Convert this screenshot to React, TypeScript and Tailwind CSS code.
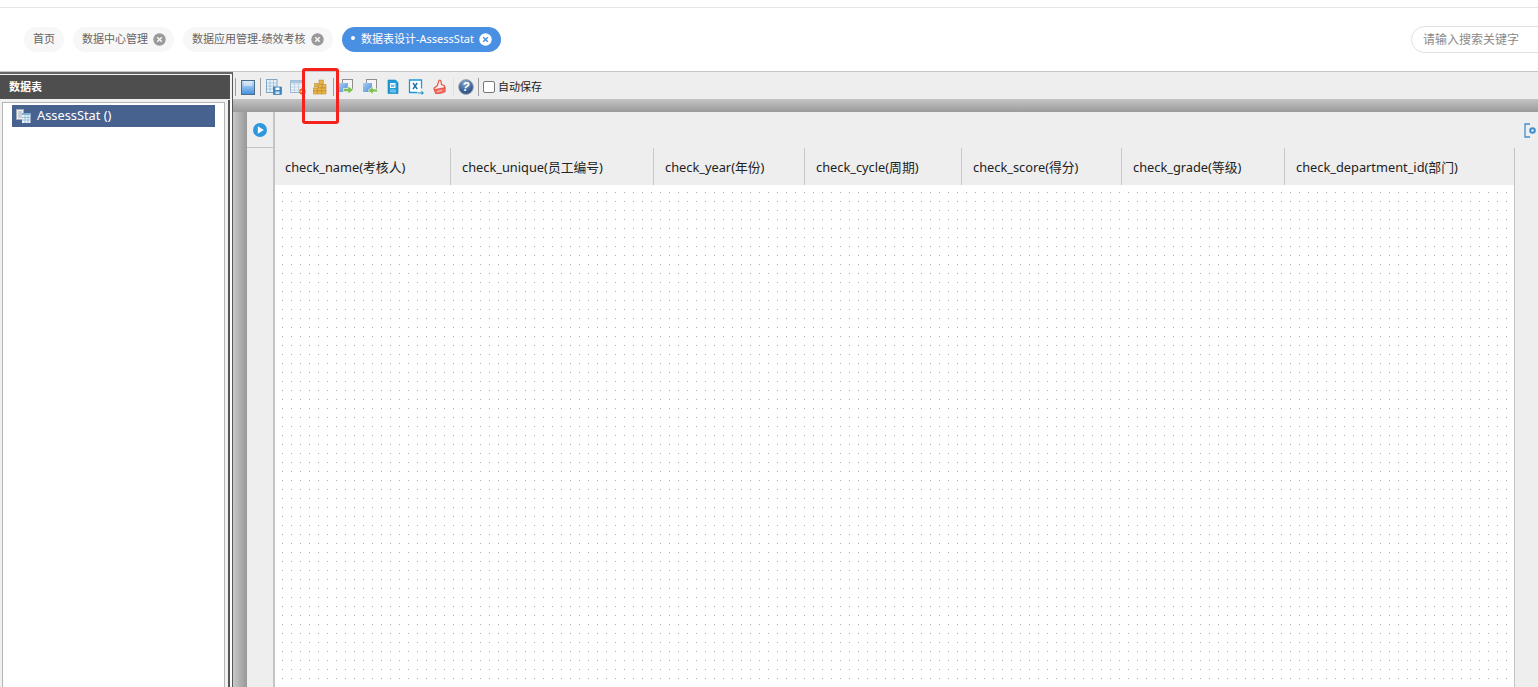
import React from "react";

const font = { fontFamily: '"Noto Sans", "Noto Sans CJK SC", sans-serif' };

function Close({ light }: { light?: boolean }) {
  return (
    <svg width="13" height="13" viewBox="0 0 13 13" className="ml-[5px] shrink-0">
      <circle cx="6.5" cy="6.5" r="6.2" fill={light ? "#ffffff" : "#9a9a9a"} />
      <path d="M4.2 4.2l4.6 4.6M8.8 4.2l-4.6 4.6" stroke={light ? "#4a90e2" : "#f7f7f7"} strokeWidth="1.5" />
    </svg>
  );
}

function Tab({ label, close = true, w }: { label: string; close?: boolean; w: string }) {
  return (
    <div className={`flex h-[25px] items-center rounded-full bg-[#f7f7f7] pl-[9px] text-[11px] text-[#666] ${w}`}>
      <span>{label}</span>
      {close && <Close />}
    </div>
  );
}

function Sep({ faint }: { faint?: boolean }) {
  return <div className={`h-[18px] w-px shrink-0 ${faint ? "bg-[#e0e0e0]" : "bg-[#9c9c9c]"}`} />;
}

const SaveIcon = () => (
  <svg width="14" height="15" viewBox="0 0 14 15">
    <defs>
      <linearGradient id="s1" x1="0" y1="0" x2="0" y2="1">
        <stop offset="0" stopColor="#cfe4f8" />
        <stop offset="1" stopColor="#3f8fdc" />
      </linearGradient>
    </defs>
    <rect x="0.5" y="0.5" width="13" height="14" fill="url(#s1)" stroke="#4a6a88" />
    <rect x="3" y="1" width="8" height="5" fill="#eaf4fc" opacity="0.5" />
  </svg>
);

const TableSaveIcon = () => (
  <svg width="16" height="16" viewBox="0 0 16 16">
    <rect x="0.5" y="0.5" width="10.5" height="13" fill="#eaf3fa" stroke="#7ea6c6" />
    <path d="M1 4h9.5M1 7h9.5M1 10h9.5M4 1v12M7.5 1v12" stroke="#9dbdd6" strokeWidth="0.8" />
    <rect x="7.5" y="8" width="8" height="7.5" fill="#3f8cc4" stroke="#2d6d9e" strokeWidth="0.6" />
    <rect x="9.5" y="8.5" width="4" height="2.5" fill="#fff" />
    <rect x="9.5" y="12.5" width="4" height="2.5" fill="#cfe4f3" />
  </svg>
);

const TableDelIcon = () => (
  <svg width="16" height="16" viewBox="0 0 16 16">
    <rect x="0.5" y="1.5" width="12" height="12" fill="#eef4f9" stroke="#9db8cf" />
    <path d="M1 5h11M1 8h11M1 11h11M4.5 2v11M8.5 2v11" stroke="#b8cde0" strokeWidth="0.8" />
    <rect x="0.5" y="1.5" width="12" height="2.5" fill="#a9c6de" />
    <circle cx="12.5" cy="12.5" r="3.2" fill="#ef6a2a" />
    <path d="M10.8 12.5h3.4" stroke="#fff" strokeWidth="1.1" />
  </svg>
);

const BlocksIcon = () => (
  <svg width="15" height="16" viewBox="0 0 15 16">
    <g fill="#e9b548" stroke="#b9851f" strokeWidth="0.5">
      <rect x="7" y="1" width="4.5" height="4" />
      <rect x="2.5" y="4.5" width="3.5" height="3.5" />
      <rect x="6.5" y="5.5" width="3.5" height="3.5" />
      <rect x="10.5" y="5.5" width="3.5" height="3.5" />
      <rect x="1.5" y="9" width="3.8" height="3" />
      <rect x="5.5" y="9" width="3.8" height="3" />
      <rect x="9.5" y="9" width="4.5" height="3" />
      <rect x="1.5" y="12" width="3.8" height="3" />
      <rect x="5.5" y="12" width="3.8" height="3" />
      <rect x="9.5" y="12" width="4.5" height="3" />
    </g>
  </svg>
);

const ImportIcon = ({ flip, id }: { flip?: boolean; id: string }) => (
  <svg width="16" height="16" viewBox="0 0 16 16">
    <defs>
      <linearGradient id={id} x1="0" y1="0" x2="1" y2="1">
        <stop offset="0" stopColor="#a9cdf2" />
        <stop offset="1" stopColor="#4f8ed8" />
      </linearGradient>
    </defs>
    <rect x="4.5" y="0.5" width="10" height="10" fill="#f4f4f4" stroke="#8f8f8f" />
    <rect x="1" y="4" width="9" height="9" fill={`url(#${id})`} />
    {flip ? (
      <path d="M15.5 10H11V7.5L6 11.5l5 4V13h4.5z" fill="#7cc04e" stroke="#f6f6f6" strokeWidth="0.7" />
    ) : (
      <path d="M5.5 9.5H10V7l5.500 4-5.500 4v-2.500H5.500z" fill="#7cc04e" stroke="#f6f6f6" strokeWidth="0.7" />
    )}
  </svg>
);

const WordIcon = () => (
  <svg width="12" height="16" viewBox="0 0 12 16">
    <path d="M1 1h7.5L11 3.5V14.500H1z" fill="#1e9ad6" stroke="#1581b6" strokeWidth="0.6" />
    <rect x="3" y="4" width="5.5" height="5" fill="#fff" />
    <path d="M4 5.2l.8 2.800.9-2.200.9 2.200.7-2.800" stroke="#1e9ad6" strokeWidth="0.7" fill="none" />
    <path d="M3 11h6M3 12.8h6" stroke="#bfe6f7" strokeWidth="0.8" />
  </svg>
);

const ExcelIcon = () => (
  <svg width="16" height="16" viewBox="0 0 16 16">
    <path d="M13.5 9.5V1H1.500v12.500h8" fill="#fff" stroke="#1e9ad6" strokeWidth="1.3" />
    <path d="M5 4l4.200 6M9.200 4L5 10" stroke="#1e6fb0" strokeWidth="1.4" />
    <path d="M10 13.500h3.500V11.500l2.500 2.500-2.500 2v-1.500H10z" fill="#1e9ad6" />
  </svg>
);

const BrushIcon = () => (
  <svg width="13" height="16" viewBox="0 0 13 16">
    <path d="M6 1.500c.8-.6 1.800-.3 2 .7l.4 3.300 3 1.300.6 2.500-10.500 2.200-.6-2.300 3.300-2.400z" fill="#fbeeee" stroke="#e2574c" strokeWidth="1.2" />
    <path d="M1.500 10.500l10.500-2 .3 4.300c-3 1.700-7 2.200-10 1.700z" fill="#ef6a5e" stroke="#d9453a" strokeWidth="0.6" />
    <path d="M4 12.500l5-1" stroke="#fbd5d0" strokeWidth="0.9" />
  </svg>
);

const HelpIcon = () => (
  <svg width="16" height="16" viewBox="0 0 16 16">
    <defs>
      <radialGradient id="h1" cx="0.45" cy="0.25" r="0.85">
        <stop offset="0" stopColor="#8fa9cf" />
        <stop offset="0.6" stopColor="#3a6199" />
        <stop offset="1" stopColor="#264677" />
      </radialGradient>
    </defs>
    <circle cx="8" cy="8" r="7.4" fill="url(#h1)" stroke="#a3a8b0" strokeWidth="1" />
    <text x="8" y="12.3" textAnchor="middle" fontSize="12" fontWeight="700" fontStyle="italic" fill="#fff" fontFamily="Liberation Sans, sans-serif">?</text>
  </svg>
);

const TreeIcon = () => (
  <svg width="15" height="15" viewBox="0 0 15 15" className="shrink-0">
    <rect x="0.5" y="0.5" width="7" height="10" fill="#eceef0" stroke="#a8acb2" strokeWidth="0.8" />
    <rect x="2" y="2" width="4" height="7" fill="#c9ccd0" />
    <rect x="6" y="4" width="8.5" height="10" fill="#e9f2f8" />
    <rect x="6" y="4" width="8.5" height="2" fill="#7eb0d6" />
    <path d="M6 8.5h8.500M6 11h8.500M9 6v8M12 6v8" stroke="#8fb6d2" strokeWidth="0.8" />
  </svg>
);

const PlayIcon = () => (
  <svg width="14" height="14" viewBox="0 0 14 14">
    <circle cx="7" cy="7" r="7" fill="#2e97e0" />
    <path d="M4.8 3.300l6 3.700-6 3.700z" fill="#ffffff" />
  </svg>
);

const columns = [
  { label: "check_name(考核人)", w: "w-[175px]" },
  { label: "check_unique(员工编号)", w: "w-[203px]" },
  { label: "check_year(年份)", w: "w-[151px]" },
  { label: "check_cycle(周期)", w: "w-[157px]" },
  { label: "check_score(得分)", w: "w-[160px]" },
  { label: "check_grade(等级)", w: "w-[163px]" },
  { label: "check_department_id(部门)", w: "w-[230px]" },
];

export default function App() {
  return (
    <div className="relative flex h-[687px] w-[1538px] flex-col overflow-hidden bg-white" style={font}>
      {/* top strip */}
      <div className="h-[8px] shrink-0 border-b border-[#e5e5e5]" />

      {/* tab bar */}
      <div className="flex h-[64px] shrink-0 items-center border-b border-[#c6c6c6] pl-[24px]">
        <div className="flex gap-[9px]">
          <Tab label="首页" close={false} w="w-[40px]" />
          <Tab label="数据中心管理" w="w-[101px]" />
          <Tab label="数据应用管理-绩效考核" w="w-[150px]" />
          <div className="flex h-[25px] w-[159px] items-center rounded-full bg-[#4a90e2] pl-[9px] text-[11px] text-white">
            <span className="mr-[6px] size-[4px] -translate-y-[2px] rounded-full bg-white" />
            <span>数据表设计-AssessStat</span>
            <Close light />
          </div>
        </div>
        <div className="ml-auto mr-[-30px] flex h-[27px] w-[157px] shrink-0 items-center rounded-full border border-[#e0e0e0] pl-[11px] pt-[1px] text-[12px] text-[#8a8a8a]">
          请输入搜索关键字
        </div>
      </div>

      {/* body */}
      <div className="flex min-h-0 flex-1">
        {/* left panel */}
        <div className="flex w-[233px] shrink-0 flex-col border-r border-t-2 border-r-[#555] border-t-[#666] bg-[#f1f1f1]">
          <div className="mt-[1px] flex h-[24px] w-[230px] shrink-0 items-center bg-[#4e4e4e] pl-[9px] text-[11px] font-bold text-white">
            数据表
          </div>
          <div className="flex min-h-0 flex-1">
            <div className="flex w-[228px] shrink-0 pl-[2px] pr-[3px] pt-[3px]">
              <div className="flex-1 border-l border-r border-t border-[#b5b5b5] bg-white pl-[9px] pt-[2px]">
                <div className="flex h-[22px] w-[203px] items-center bg-[#47628f] pl-[4px] text-[12.8px] text-white">
                  <TreeIcon />
                  <span className="ml-[6px]">AssessStat ()</span>
                </div>
              </div>
            </div>
            <div className="mt-[1px] w-[2px] shrink-0 bg-[#555]" />
            <div className="flex-1 bg-white" />
          </div>
        </div>

        {/* designer */}
        <div className="flex min-w-0 flex-1 flex-col">
          <div className="flex h-[27px] shrink-0 items-center bg-[#eeeeee] pl-[2px] pt-[3px]">
            <Sep />
            <div className="ml-[5px] flex"><SaveIcon /></div>
            <div className="ml-[5px]"><Sep /></div>
            <div className="ml-[5px] flex"><TableSaveIcon /></div>
            <div className="ml-[8px] flex"><TableDelIcon /></div>
            <div className="ml-[6px] flex"><BlocksIcon /></div>
            <div className="ml-[6px]"><Sep /></div>
            <div className="ml-[4px] flex"><ImportIcon id="i1" /></div>
            <div className="ml-[8px] flex"><ImportIcon id="i2" flip /></div>
            <div className="ml-[9px] flex"><WordIcon /></div>
            <div className="ml-[9px] flex"><ExcelIcon /></div>
            <div className="ml-[9px] flex"><BrushIcon /></div>
            <div className="ml-[7px]"><Sep faint /></div>
            <div className="ml-[4px] flex"><HelpIcon /></div>
            <div className="ml-[4px]"><Sep /></div>
            <div className="ml-[4px] size-[12px] rounded-[2px] border border-[#777] bg-white" />
            <span className="ml-[3px] text-[11px] text-[#222]">自动保存</span>
          </div>

          <div className="h-[13px] shrink-0 bg-gradient-to-b from-[#c4c4c4] to-[#9b9b9b]" />

          <div className="flex min-h-0 flex-1">
            <div className="w-[14px] shrink-0 bg-gradient-to-r from-[#c8c8c8] to-[#989898]" />
            <div className="flex min-w-0 flex-1 flex-col bg-[#eeeeee]">
              {/* canvas top row */}
              <div className="flex h-[36px] shrink-0">
                <div className="flex w-[28px] shrink-0 items-center justify-center border-b border-r-2 border-[#c4c4c4] pr-[1px]">
                  <PlayIcon />
                </div>
                <div className="flex flex-1 items-center justify-end">
                  <svg width="14" height="15" viewBox="0 0 14 15" className="shrink-0">
                    <path d="M6 1H1v13h5" fill="none" stroke="#3f8fcf" strokeWidth="1.3" />
                    <circle cx="8.5" cy="7.5" r="2.300" fill="none" stroke="#3f8fcf" strokeWidth="2" />
                  </svg>
                </div>
              </div>

              <div className="flex min-h-0 flex-1">
                <div className="w-[28px] shrink-0 border-r-2 border-[#c4c4c4]" />
                <div className="flex w-[1239px] shrink-0 flex-col bg-white">
                  <div className="flex h-[37px] shrink-0 bg-[#eeeeee]">
                    {columns.map((c, i) => (
                      <div
                        key={c.label}
                        className={`flex items-center pt-[3px] text-[12.8px] text-[#222] ${c.w} ${i === 0 ? "pl-[10px]" : "border-l border-[#c8c8c8] pl-[11px]"}`}
                      >
                        {c.label}
                      </div>
                    ))}
                  </div>
                  <div className="flex-1 bg-[radial-gradient(circle,#aaa_0.7px,transparent_0.8px)] bg-[size:9px_9px] bg-[position:3px_3px]" />
                </div>
                <div className="flex-1 border-l border-[#c4c4c4]" />
              </div>
            </div>
          </div>
        </div>
      </div>

      {/* annotation */}
      <div className="absolute left-[302px] top-[68px] h-[56px] w-[37px] rounded-[3px] border-[3px] border-[#f5211c]" />
    </div>
  );
}
